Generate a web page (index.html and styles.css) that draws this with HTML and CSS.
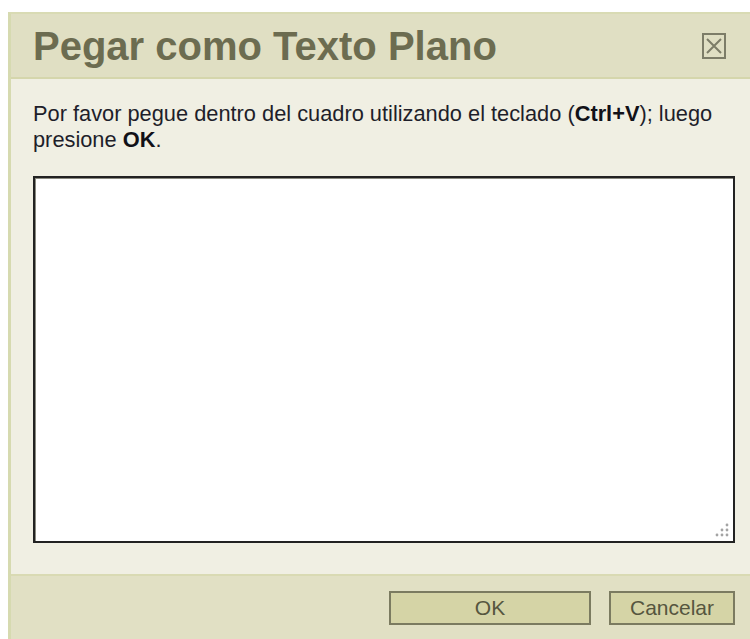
FILE: index.html
```html
<!DOCTYPE html>
<html lang="es">
<head>
<meta charset="utf-8">
<title>Pegar como Texto Plano</title>
<link rel="stylesheet" href="styles.css">
</head>
<body>
<div class="dialog">
  <div class="dialog-header">
    <h1 class="dialog-title">Pegar como Texto Plano</h1>
    <button class="close-btn" type="button" aria-label="Cerrar">
      <svg viewBox="0 0 24 26" width="24" height="26">
        <rect x="1" y="1" width="22" height="24" fill="none" stroke="#7d7d68" stroke-width="2"/>
        <path d="M5 6 L19 20 M19 6 L5 20" stroke="#7d7d68" stroke-width="2" fill="none"/>
      </svg>
    </button>
  </div>
  <div class="dialog-body">
    <p class="instructions">Por favor pegue dentro del cuadro utilizando el teclado (<b>Ctrl+V</b>); luego<br>presione <b>OK</b>.</p>
    <div class="paste-box">
      <textarea class="paste-area"></textarea>
      <svg class="grip" viewBox="0 0 14 14" width="14" height="14">
        <circle cx="12" cy="2" r="1.4" fill="#a4a4a4"/>
        <circle cx="7" cy="7" r="1.4" fill="#a4a4a4"/>
        <circle cx="12" cy="7" r="1.4" fill="#a4a4a4"/>
        <circle cx="2" cy="12" r="1.4" fill="#a4a4a4"/>
        <circle cx="7" cy="12" r="1.4" fill="#a4a4a4"/>
        <circle cx="12" cy="12" r="1.4" fill="#a4a4a4"/>
      </svg>
    </div>
  </div>
  <div class="dialog-footer">
    <button class="btn btn-ok" type="button">OK</button>
    <button class="btn btn-cancel" type="button">Cancelar</button>
  </div>
</div>
</body>
</html>
```

FILE: styles.css
```css
html, body {
  margin: 0;
  padding: 0;
  background: #ffffff;
  height: 100%;
  overflow: hidden;
}

.dialog {
  margin: 12px 0 0 8px;
  border-top: 2px solid #d9dbb4;
  border-left: 3px solid #d6dab0;
  background: #f0efe3;
  display: flex;
  flex-direction: column;
  height: calc(100% - 12px);
  box-sizing: border-box;
  font-family: "Liberation Sans", Arial, sans-serif;
}

.dialog-header {
  height: 63px;
  background: #e0dfc3;
  border-bottom: 2px solid #d5d6ac;
  display: flex;
  align-items: center;
  justify-content: space-between;
  padding: 0 24px 0 22px;
  flex: none;
}

.dialog-title {
  margin: 0;
  font-size: 40px;
  font-weight: bold;
  color: #6c6c50;
  line-height: 1;
}

.close-btn {
  border: 0;
  background: none;
  padding: 0;
  width: 24px;
  height: 26px;
  display: block;
}

.close-btn svg {
  display: block;
}

.dialog-body {
  flex: 1;
  padding: 22px 15px 31px 22px;
  display: flex;
  flex-direction: column;
}

.instructions {
  margin: 0 0 23px;
  font-size: 21.8px;
  line-height: 26px;
  color: #1e1e2a;
}

.instructions b {
  color: #111118;
}

.paste-box {
  position: relative;
  flex: 1;
  display: flex;
}

.paste-area {
  flex: 1;
  margin: 0;
  resize: none;
  border: 2px solid #222222;
  box-shadow: inset 1px 1px 0 #8a8a80;
  background: #ffffff;
  outline: none;
}

.grip {
  position: absolute;
  right: 6px;
  bottom: 6px;
}

.dialog-footer {
  height: 65px;
  flex: none;
  background: #e1e0c4;
  border-top: 2px solid #d9dab3;
  box-sizing: border-box;
  display: flex;
  align-items: center;
  justify-content: flex-end;
  gap: 18px;
  padding: 0 15px 0 0;
}

.btn {
  height: 34px;
  background: #d5d4a6;
  border: 2px solid #7b7b60;
  color: #56563f;
  font-family: "Liberation Sans", Arial, sans-serif;
  font-size: 21px;
  padding: 0;
}

.btn-ok {
  width: 202px;
}

.btn-cancel {
  width: 126px;
}
```
